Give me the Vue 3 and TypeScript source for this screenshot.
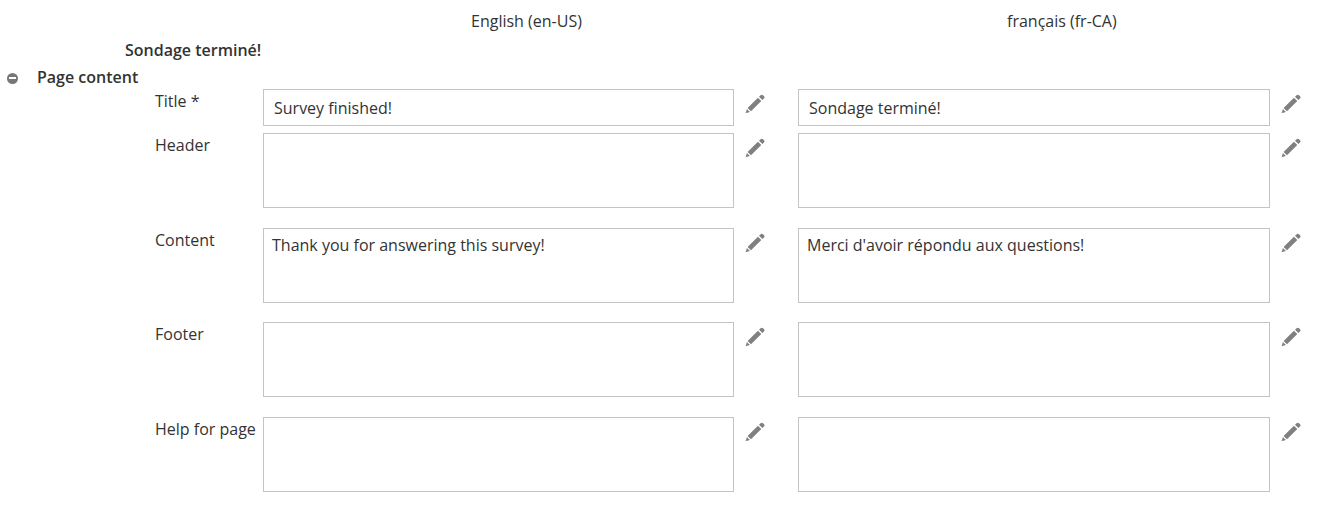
<script setup lang="ts">
interface Row {
  label: string;
  en: string;
  fr: string;
  single?: boolean;
}

const rows: Row[] = [
  { label: "Title *", en: "Survey finished!", fr: "Sondage terminé!", single: true },
  { label: "Header", en: "", fr: "" },
  { label: "Content", en: "Thank you for answering this survey!", fr: "Merci d'avoir répondu aux questions!" },
  { label: "Footer", en: "", fr: "" },
  { label: "Help for page", en: "", fr: "" },
];

const pencil =
  "M15.6 1.2c.7-.7 1.7-.7 2.4 0l1 1c.7.7.7 1.6 0 2.3l-1.6 1.6-3.4-3.3zM12.9 3.7l3.4 3.4L6 17.2l-3.4-3.3zM1.9 15l3 3-4.3 1.3z";
</script>

<template>
  <div class="page">
    <div class="lang-head">
      <div class="lang">English (en-US)</div>
      <div class="lang">français (fr-CA)</div>
    </div>
    <div class="survey-name">Sondage terminé!</div>
    <div class="section">
      <span class="collapse"><span class="bar"></span></span>
      <span class="section-title">Page content</span>
    </div>
    <div class="rows">
      <div v-for="row in rows" :key="row.label" class="row" :class="{ single: row.single }">
        <label class="label">{{ row.label }}</label>
        <template v-for="value in [row.en, row.fr]" :key="value + row.label">
          <div v-if="row.single" class="box input">{{ value }}</div>
          <div v-else class="box area">{{ value }}</div>
          <svg class="pencil" viewBox="0 0 20 20" width="20" height="20">
            <path :d="pencil" fill="#808080" />
          </svg>
        </template>
      </div>
    </div>
  </div>
</template>

<style scoped>
.page {
  width: 1343px;
  height: 521px;
  overflow: hidden;
  font-family: "Open Sans", "Liberation Sans", sans-serif;
  font-size: 16px;
  line-height: 24px;
  color: #333;
  background: #fff;
}
.lang-head {
  display: grid;
  grid-template-columns: 471px 536px auto;
  height: 38px;
  padding-top: 9px;
  box-sizing: border-box;
}
.lang-head .lang:first-child {
  grid-column: 1 / 3;
  padding-left: 471px;
}
.survey-name {
  height: 27px;
  padding-left: 125px;
  font-weight: 600;
}
.section {
  display: flex;
  align-items: center;
  height: 24px;
}
.collapse {
  display: flex;
  align-items: center;
  justify-content: center;
  width: 11px;
  height: 11px;
  margin-left: 7px;
  margin-right: 19px;
  margin-top: 2px;
  border-radius: 50%;
  background: #777;
}
.bar {
  width: 7px;
  height: 2px;
  background: #fff;
}
.section-title {
  font-weight: 600;
}
.rows {
  padding-top: 0;
}
.row {
  display: grid;
  grid-template-columns: 108px 471px 64px 472px 64px;
  grid-template-rows: 75px;
  margin-left: 155px;
  margin-bottom: 19.67px;
  width: 1179px;
}
.row.single {
  grid-template-rows: 37px;
  margin-bottom: 7px;
}
.label {
  padding-top: 0;
  white-space: nowrap;
}
.box {
  box-sizing: border-box;
  border: 1px solid #c4c4c4;
  background: #fff;
  color: #333;
}
.input {
  height: 37px;
  padding: 6px 10px;
}
.area {
  height: 75px;
  padding: 4px 8px;
}
.pencil {
  margin: 5px 0 0 11px;
}
</style>

<style>
html,
body {
  margin: 0;
  background: #fff;
}
</style>
